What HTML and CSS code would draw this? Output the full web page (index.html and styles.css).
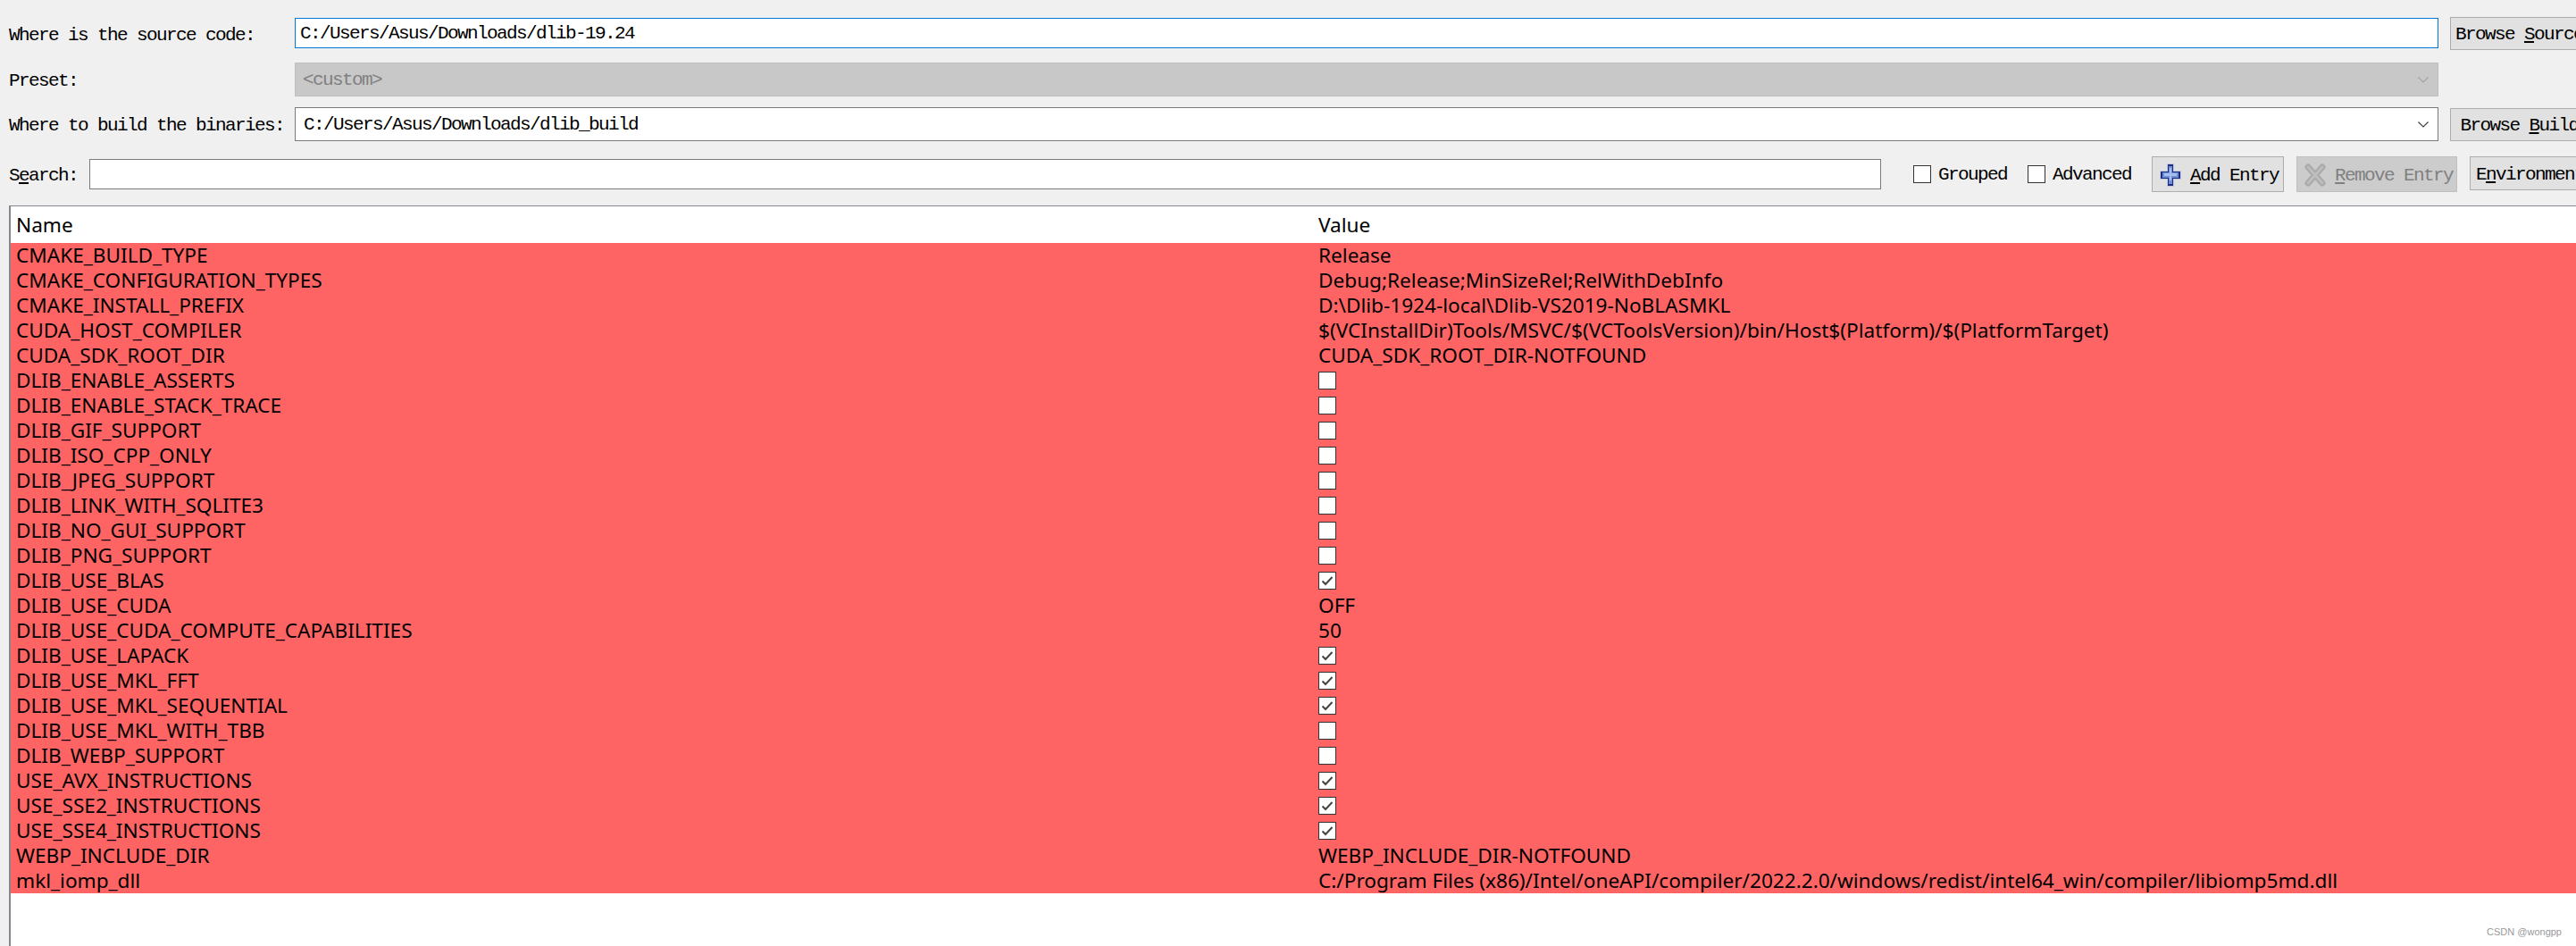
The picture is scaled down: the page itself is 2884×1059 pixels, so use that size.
FILE: index.html
```html
<!DOCTYPE html>
<html lang="en">
<head>
<meta charset="utf-8">
<title>CMake</title>
<link rel="stylesheet" href="styles.css">
</head>
<body>
<main class="app">
  <div class="row row-source">
    <label class="label">Where is the source code:</label>
    <div class="field field-focus"><span>C:/Users/Asus/Downloads/dlib-19.24</span></div>
    <button class="btn btn-browse">Browse <u>S</u>ource...</button>
  </div>
  <div class="row row-preset">
    <label class="label">Preset:</label>
    <div class="field field-disabled"><span>&lt;custom&gt;</span>
      <svg class="chev" width="12" height="7" viewBox="0 0 12 7"><path d="M.5.5l5.5 5.5 5.5-5.5" fill="none" stroke="#a3a3a3" stroke-width="1.2"/></svg>
    </div>
  </div>
  <div class="row row-build">
    <label class="label">Where to build the binaries:</label>
    <div class="field field-combo"><span>C:/Users/Asus/Downloads/dlib_build</span>
      <svg class="chev" width="12" height="7" viewBox="0 0 12 7"><path d="M.5.5l5.5 5.5 5.5-5.5" fill="none" stroke="#404040" stroke-width="1.2"/></svg>
    </div>
    <button class="btn btn-browse">Browse <u>B</u>uild...</button>
  </div>
  <div class="row row-tools">
    <label class="label label-search">S<u>e</u>arch:</label>
    <div class="field field-search"></div>
    <label class="opt opt-grouped"><span class="box"></span>Grouped</label>
    <label class="opt opt-advanced"><span class="box"></span>Advanced</label>
    <button class="btn btn-tool btn-add">
      <svg width="24" height="26" viewBox="0 0 24 26" shape-rendering="crispEdges"><path fill="#c3c9de" d="M8 0h8v8h8v10h-8v8H8v-8H0V8h8z"/><path fill="#1f2f80" d="M9 1h6v8h8v8h-8v8H9v-8H1V9h8z"/><path fill="#6f8ed8" d="M10 3h4v7h7v6h-7v7h-4v-7H3v-6h7z"/><path fill="#a7bdec" d="M11 5h2v6h6v3h-6v5h-2v-5H5v-3h6z"/></svg>
      <span class="tool-text"><u>A</u>dd Entry</span>
    </button>
    <button class="btn btn-tool btn-remove" disabled>
      <svg width="24" height="26" viewBox="0 0 24 26"><path d="M4 4l16 18M20 4L4 22" stroke="#a9a9a9" stroke-width="7" stroke-linecap="round" fill="none"/><path d="M4 4l16 18M20 4L4 22" stroke="#bdbdbd" stroke-width="3" stroke-linecap="round" fill="none"/></svg>
      <span class="tool-text"><u>R</u>emove Entry</span>
    </button>
    <button class="btn btn-env">E<u>n</u>vironment...</button>
  </div>
  <section class="tree">
    <div class="tree-head"><div class="col-name">Name</div><div class="col-value">Value</div></div>
    <div class="tree-row"><div class="col-name">CMAKE_BUILD_TYPE</div><div class="col-value">Release</div></div>
    <div class="tree-row"><div class="col-name">CMAKE_CONFIGURATION_TYPES</div><div class="col-value">Debug;Release;MinSizeRel;RelWithDebInfo</div></div>
    <div class="tree-row"><div class="col-name">CMAKE_INSTALL_PREFIX</div><div class="col-value">D:\Dlib-1924-local\Dlib-VS2019-NoBLASMKL</div></div>
    <div class="tree-row"><div class="col-name">CUDA_HOST_COMPILER</div><div class="col-value">$(VCInstallDir)Tools/MSVC/$(VCToolsVersion)/bin/Host$(Platform)/$(PlatformTarget)</div></div>
    <div class="tree-row"><div class="col-name">CUDA_SDK_ROOT_DIR</div><div class="col-value">CUDA_SDK_ROOT_DIR-NOTFOUND</div></div>
    <div class="tree-row"><div class="col-name">DLIB_ENABLE_ASSERTS</div><div class="col-value"><span class="cb"></span></div></div>
    <div class="tree-row"><div class="col-name">DLIB_ENABLE_STACK_TRACE</div><div class="col-value"><span class="cb"></span></div></div>
    <div class="tree-row"><div class="col-name">DLIB_GIF_SUPPORT</div><div class="col-value"><span class="cb"></span></div></div>
    <div class="tree-row"><div class="col-name">DLIB_ISO_CPP_ONLY</div><div class="col-value"><span class="cb"></span></div></div>
    <div class="tree-row"><div class="col-name">DLIB_JPEG_SUPPORT</div><div class="col-value"><span class="cb"></span></div></div>
    <div class="tree-row"><div class="col-name">DLIB_LINK_WITH_SQLITE3</div><div class="col-value"><span class="cb"></span></div></div>
    <div class="tree-row"><div class="col-name">DLIB_NO_GUI_SUPPORT</div><div class="col-value"><span class="cb"></span></div></div>
    <div class="tree-row"><div class="col-name">DLIB_PNG_SUPPORT</div><div class="col-value"><span class="cb"></span></div></div>
    <div class="tree-row"><div class="col-name">DLIB_USE_BLAS</div><div class="col-value"><span class="cb"><svg width="16" height="16" viewBox="0 0 16 16"><path d="M2.5 8.5l3.5 3.5 7.5-8" fill="none" stroke="#444" stroke-width="2"/></svg></span></div></div>
    <div class="tree-row"><div class="col-name">DLIB_USE_CUDA</div><div class="col-value">OFF</div></div>
    <div class="tree-row"><div class="col-name">DLIB_USE_CUDA_COMPUTE_CAPABILITIES</div><div class="col-value">50</div></div>
    <div class="tree-row"><div class="col-name">DLIB_USE_LAPACK</div><div class="col-value"><span class="cb"><svg width="16" height="16" viewBox="0 0 16 16"><path d="M2.5 8.5l3.5 3.5 7.5-8" fill="none" stroke="#444" stroke-width="2"/></svg></span></div></div>
    <div class="tree-row"><div class="col-name">DLIB_USE_MKL_FFT</div><div class="col-value"><span class="cb"><svg width="16" height="16" viewBox="0 0 16 16"><path d="M2.5 8.5l3.5 3.5 7.5-8" fill="none" stroke="#444" stroke-width="2"/></svg></span></div></div>
    <div class="tree-row"><div class="col-name">DLIB_USE_MKL_SEQUENTIAL</div><div class="col-value"><span class="cb"><svg width="16" height="16" viewBox="0 0 16 16"><path d="M2.5 8.5l3.5 3.5 7.5-8" fill="none" stroke="#444" stroke-width="2"/></svg></span></div></div>
    <div class="tree-row"><div class="col-name">DLIB_USE_MKL_WITH_TBB</div><div class="col-value"><span class="cb"></span></div></div>
    <div class="tree-row"><div class="col-name">DLIB_WEBP_SUPPORT</div><div class="col-value"><span class="cb"></span></div></div>
    <div class="tree-row"><div class="col-name">USE_AVX_INSTRUCTIONS</div><div class="col-value"><span class="cb"><svg width="16" height="16" viewBox="0 0 16 16"><path d="M2.5 8.5l3.5 3.5 7.5-8" fill="none" stroke="#444" stroke-width="2"/></svg></span></div></div>
    <div class="tree-row"><div class="col-name">USE_SSE2_INSTRUCTIONS</div><div class="col-value"><span class="cb"><svg width="16" height="16" viewBox="0 0 16 16"><path d="M2.5 8.5l3.5 3.5 7.5-8" fill="none" stroke="#444" stroke-width="2"/></svg></span></div></div>
    <div class="tree-row"><div class="col-name">USE_SSE4_INSTRUCTIONS</div><div class="col-value"><span class="cb"><svg width="16" height="16" viewBox="0 0 16 16"><path d="M2.5 8.5l3.5 3.5 7.5-8" fill="none" stroke="#444" stroke-width="2"/></svg></span></div></div>
    <div class="tree-row"><div class="col-name">WEBP_INCLUDE_DIR</div><div class="col-value">WEBP_INCLUDE_DIR-NOTFOUND</div></div>
    <div class="tree-row"><div class="col-name">mkl_iomp_dll</div><div class="col-value">C:/Program Files (x86)/Intel/oneAPI/compiler/2022.2.0/windows/redist/intel64_win/compiler/libiomp5md.dll</div></div>
  </section>
</main>
<div class="watermark">CSDN @wongpp</div>
</body>
</html>
```
FILE: styles.css
```css
html, body {
  margin: 0;
  height: 100%;
  overflow: hidden;
  background: #f0f0f0;
}
body {
  position: relative;
  font-family: "Liberation Mono", monospace;
  font-size: 21px;
  letter-spacing: -1.6px;
  color: #000;
}
.app {
  width: 2884px;
  height: 1059px;
  box-sizing: border-box;
  padding: 19px 0 0 10px;
  display: flex;
  flex-direction: column;
  overflow: hidden;
}
.row {
  display: flex;
  align-items: flex-start;
  flex: none;
}
.row-source { height: 37px; }
.row-preset { height: 38px; margin-top: 14px; }
.row-build { height: 38px; margin-top: 12px; }
.row-tools { height: 40px; margin-top: 17px; }
.label {
  flex: none;
  width: 320px;
  line-height: 38px;
  white-space: pre;
  padding-top: 2px;
}
.label-search { width: 90px; line-height: 40px; }
.field {
  flex: none;
  box-sizing: border-box;
  width: 2400px;
  height: 38px;
  background: #fff;
  border: 1px solid #7a7a7a;
  display: flex;
  align-items: center;
  justify-content: space-between;
  padding: 1px 10px 0 8px;
}
.field-focus {
  height: 34px;
  margin-top: 1px;
  border: 1px solid #0078d7;
  padding-left: 5px;
}
.field-disabled {
  background: #c8c8c8;
  border-color: #bfbfbf;
  color: #808080;
  padding-left: 8px;
}
.field-combo { padding-left: 9px; }
.field-search {
  width: 2006px;
  height: 34px;
  margin-top: 3px;
}
.btn {
  flex: none;
  box-sizing: border-box;
  height: 37px;
  margin: 0 0 0 13px;
  padding: 2px 0 0;
  font: inherit;
  letter-spacing: inherit;
  color: #000;
  background: #e1e1e1;
  border: 1px solid #adadad;
  white-space: pre;
}
.btn-browse { width: 188px; }
.row-build .btn-browse { margin-top: 1px; }
.opt {
  flex: none;
  display: flex;
  align-items: center;
  height: 40px;
  padding-top: 1px;
  box-sizing: border-box;
  white-space: pre;
}
.opt-grouped { margin-left: 36px; }
.opt-advanced { margin-left: 23px; }
.box {
  width: 20px;
  height: 20px;
  box-sizing: border-box;
  background: #fff;
  border: 1px solid #333;
  margin: -2px 8px 0 0;
}
.btn-tool {
  display: flex;
  align-items: center;
  height: 40px;
}
.btn-add {
  width: 148px;
  margin-left: 23px;
  padding-left: 8px;
}
.btn-remove {
  width: 180px;
  margin-left: 14px;
  padding-left: 8px;
  background: #cccccc;
  border-color: #bfbfbf;
  color: #808080;
}
.tool-text { margin-left: 10px; }
.btn-env {
  width: 190px;
  height: 38px;
  margin-left: 14px;
  text-align: left;
  padding-left: 6px;
}
.tree {
  flex: none;
  box-sizing: border-box;
  width: 2900px;
  height: 830px;
  margin-top: 15px;
  background: #fff;
  border: 1px solid #828790;
  border-left-width: 2px;
  font-family: "Noto Sans", sans-serif;
  font-size: 22.6px;
  letter-spacing: 0;
}
.tree-head, .tree-row {
  display: grid;
  grid-template-columns: 1464px 1fr;
  white-space: nowrap;
}
.tree-head { height: 41px; line-height: 42px; }
.tree-row { height: 28px; line-height: 27px; background: #ff6464; }
.col-name { padding-left: 6px; }
.cb {
  display: block;
  box-sizing: border-box;
  width: 20px;
  height: 20px;
  margin-top: 4px;
  background: #fff;
  border: 1px solid #333;
  padding: 1px;
}
.cb svg { display: block; }
.watermark {
  position: absolute;
  right: 16px;
  bottom: 9px;
  font-family: "Liberation Sans", sans-serif;
  font-size: 11px;
  letter-spacing: 0;
  line-height: 13px;
  color: #999;
}
```
